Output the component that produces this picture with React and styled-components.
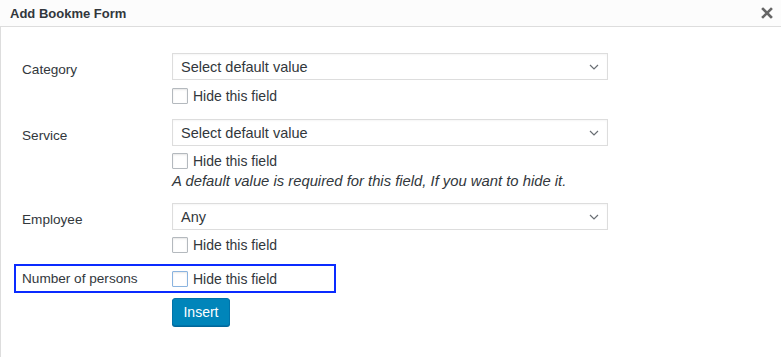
import React from "react";
import styled, { createGlobalStyle } from "styled-components";

const GlobalStyle = createGlobalStyle`
  html, body {
    margin: 0;
    padding: 0;
    background: #fff;
    font-family: "Liberation Sans", Arial, sans-serif;
    color: #23282d;
  }
`;

const Modal = styled.div`
  width: 781px;
  height: 357px;
  display: flex;
  flex-direction: column;
  overflow: hidden;
`;

const Header = styled.div`
  height: 26px;
  flex: none;
  display: flex;
  align-items: center;
  justify-content: space-between;
  padding: 0 8px 0 10px;
  background: #fcfcfc;
  border-bottom: 1px solid #dddddd;
`;

const Title = styled.div`
  font-size: 13px;
  font-weight: bold;
  color: #32373c;
  margin-top: 1px;
`;

const Body = styled.div`
  flex: 1;
  border-left: 1px solid #dddddd;
  padding: 26px 0 0 21px;
`;

const Row = styled.div`
  display: grid;
  grid-template-columns: 150px 436px;
  margin-top: ${(p) => p.$top || 0}px;
`;

const Label = styled.div`
  font-size: 13.6px;
  color: #32373c;
  padding-top: ${(p) => p.$pad ?? 9}px;
`;

const Field = styled.div`
  display: flex;
  flex-direction: column;
`;

const SelectBox = styled.div`
  height: 27px;
  box-sizing: border-box;
  border: 1px solid #dddddd;
  box-shadow: inset 0 1px 2px rgba(0, 0, 0, 0.04);
  display: flex;
  align-items: center;
  justify-content: space-between;
  padding: 0 8px 0 8px;
  font-size: 14.5px;
  color: #32373c;
  background: #fff;
`;

const CheckLine = styled.label`
  display: flex;
  align-items: center;
  height: 20px;
  margin-top: ${(p) => p.$top ?? 6}px;
  font-size: 14px;
  color: #32373c;
  gap: 5px;
`;

const Box = styled.span`
  width: 16px;
  height: 16px;
  box-sizing: border-box;
  border: 1px solid ${(p) => (p.$focus ? "#8ab4e0" : "#b4b9be")};
  background: #fff;
  box-shadow: inset 0 1px 2px rgba(0, 0, 0, 0.1);
  border-radius: 1px;
  flex: none;
`;

const Note = styled.div`
  font-size: 14.8px;
  font-style: italic;
  color: #32373c;
  margin-top: 2px;
  line-height: 16px;
`;

const Highlight = styled.div`
  display: grid;
  grid-template-columns: 150px 161px;
  width: 322px;
  height: 29px;
  box-sizing: border-box;
  border: 2px solid #0a2bff;
  margin: 9px 0 0 -8px;
  padding-left: 6px;
  align-items: center;
`;

const InsertButton = styled.button`
  margin: 5px 0 0 150px;
  width: 58px;
  height: 28px;
  background: #0085ba;
  border: 1px solid #0073aa;
  border-radius: 3px;
  box-shadow: 0 1px 0 #006799;
  color: #fff;
  font-family: "Liberation Sans", Arial, sans-serif;
  font-size: 14px;
  padding: 0;
  display: block;
`;

const Chevron = () => (
  <svg width="10" height="6" viewBox="0 0 10 6">
    <path d="M1 1l4 4 4-4" fill="none" stroke="#6a6f74" strokeWidth="1.2" />
  </svg>
);

const Close = () => (
  <svg width="12" height="12" viewBox="0 0 12 12">
    <path d="M2 2l8 8M10 2l-8 8" stroke="#666" strokeWidth="2.6" strokeLinecap="square" />
  </svg>
);

const Hide = ({ top, focus }) => (
  <CheckLine $top={top}>
    <Box $focus={focus} />
    Hide this field
  </CheckLine>
);

const Select = ({ value }) => (
  <SelectBox>
    {value}
    <Chevron />
  </SelectBox>
);

export default function App() {
  return (
    <Modal>
      <GlobalStyle />
      <Header>
        <Title>Add Bookme Form</Title>
        <Close />
      </Header>
      <Body>
        <Row>
          <Label>Category</Label>
          <Field>
            <Select value="Select default value" />
            <Hide top={6} />
          </Field>
        </Row>
        <Row $top={13}>
          <Label>Service</Label>
          <Field>
            <Select value="Select default value" />
            <Hide top={5} />
            <Note>A default value is required for this field, If you want to hide it.</Note>
          </Field>
        </Row>
        <Row $top={14}>
          <Label>Employee</Label>
          <Field>
            <Select value="Any" />
            <Hide top={5} />
          </Field>
        </Row>
        <Highlight>
          <Label $pad={0}>Number of persons</Label>
          <CheckLine $top={0}>
            <Box $focus />
            Hide this field
          </CheckLine>
        </Highlight>
        <InsertButton>Insert</InsertButton>
      </Body>
    </Modal>
  );
}
